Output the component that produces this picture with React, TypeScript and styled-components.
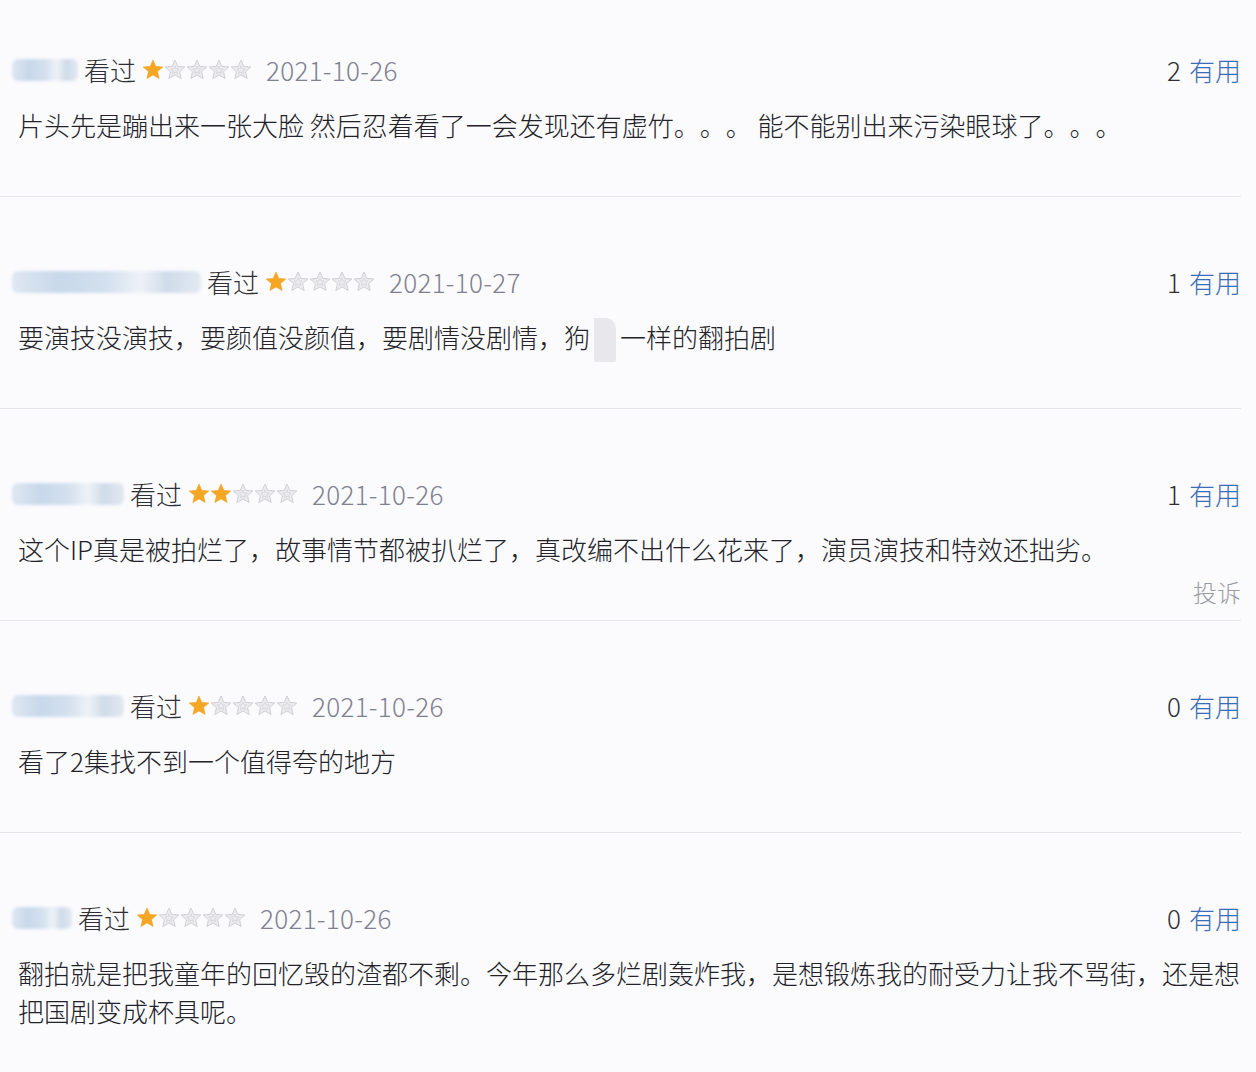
import React from "react";
import styled, { createGlobalStyle } from "styled-components";

const Global = createGlobalStyle`
  html, body { margin: 0; padding: 0; background: #fbfbfd; }
  body {
    font-family: "Noto Sans CJK SC", "Noto Sans", sans-serif;
    font-weight: 300;
    text-spacing-trim: space-all;
  }
`;

const List = styled.div`
  width: 1241px;
  display: flex;
  flex-direction: column;
`;

const Item = styled.div<{ $first?: boolean }>`
  display: flex;
  flex-direction: column;
  padding: ${(p) => (p.$first ? "54px" : "69px")} 0 12px 18px;
  border-bottom: 1px solid #e6e6ea;
`;

const Header = styled.div`
  display: flex;
  align-items: center;
  justify-content: space-between;
  height: 32px;
`;

const Meta = styled.div`
  display: flex;
  align-items: center;
`;

const NameBlur = styled.div<{ $w: number }>`
  width: ${(p) => p.$w}px;
  height: 22px;
  margin-left: -6px;
  margin-right: 6px;
  border-radius: 6px;
  background: linear-gradient(
    90deg,
    #dfe7f1 0%,
    #c8d8ea 25%,
    #d3e0ee 50%,
    #eef2f7 68%,
    #cfdbe9 82%,
    #e3e9f1 100%
  );
  filter: blur(1.5px);
`;

const Watched = styled.span`
  font-size: 26px;
  line-height: 32px;
  color: #2e2e34;
`;

const Stars = styled.div`
  display: flex;
  align-items: center;
  margin-left: 6px;
`;

const DateText = styled.span`
  margin-left: 14px;
  font-size: 26px;
  line-height: 32px;
  color: #808090;
  letter-spacing: 0.3px;
`;

const Useful = styled.div`
  display: flex;
  align-items: center;
  gap: 8px;
  font-size: 26px;
  line-height: 32px;
`;

const Count = styled.span`
  color: #2e2e34;
`;

const UsefulLink = styled.span`
  color: #3a6db5;
`;

const Content = styled.p`
  margin: 20px 0 0 0;
  width: 1224px;
  font-size: 26px;
  line-height: 38px;
  color: #222228;
`;

const Mask = styled.span`
  display: inline-block;
  width: 22px;
  height: 44px;
  vertical-align: top;
  margin: 0 4px -6px 4px;
  background: #e8e8ec;
  border-radius: 0 10px 2px 2px;
`;

const Footer = styled.div`
  display: flex;
  justify-content: flex-end;
  height: 32px;
  margin-top: 8px;
`;

const Report = styled.span`
  font-size: 24px;
  line-height: 32px;
  color: #9a9aa2;
`;

const STAR_PATH =
  "M11 1 L13.8 7.4 L20.8 8 L15.5 12.6 L17.1 19.5 L11 15.9 L4.9 19.5 L6.5 12.6 L1.2 8 L8.2 7.4 Z";

function Star({ filled }: { filled: boolean }) {
  return (
    <svg width="22" height="22" viewBox="0 0 22 22">
      {filled ? (
        <path d={STAR_PATH} fill="#f5a623" stroke="#f0a020" strokeWidth="0.6" />
      ) : (
        <>
          <path d={STAR_PATH} fill="#ececef" stroke="#cfcfd4" strokeWidth="1" />
          <path
            d="M11 7 L12.2 9.8 L15 10 L12.9 11.9 L13.5 14.6 L11 13.1 L8.5 14.6 L9.1 11.9 L7 10 L9.8 9.8 Z"
            fill="none"
            stroke="#d4d4d9"
            strokeWidth="0.8"
          />
        </>
      )}
    </svg>
  );
}

type Review = {
  nameW: number;
  rating: number;
  date: string;
  useful: number;
  text: React.ReactNode;
  report?: boolean;
};

const reviews: Review[] = [
  {
    nameW: 66,
    rating: 1,
    date: "2021-10-26",
    useful: 2,
    text: "片头先是蹦出来一张大脸 然后忍着看了一会发现还有虚竹。。。 能不能别出来污染眼球了。。。",
  },
  {
    nameW: 189,
    rating: 1,
    date: "2021-10-27",
    useful: 1,
    text: (
      <>
        要演技没演技，要颜值没颜值，要剧情没剧情，狗
        <Mask />
        一样的翻拍剧
      </>
    ),
  },
  {
    nameW: 112,
    rating: 2,
    date: "2021-10-26",
    useful: 1,
    text: "这个IP真是被拍烂了，故事情节都被扒烂了，真改编不出什么花来了，演员演技和特效还拙劣。",
    report: true,
  },
  {
    nameW: 112,
    rating: 1,
    date: "2021-10-26",
    useful: 0,
    text: "看了2集找不到一个值得夸的地方",
  },
  {
    nameW: 60,
    rating: 1,
    date: "2021-10-26",
    useful: 0,
    text: "翻拍就是把我童年的回忆毁的渣都不剩。今年那么多烂剧轰炸我，是想锻炼我的耐受力让我不骂街，还是想把国剧变成杯具呢。",
  },
];

export default function App() {
  return (
    <>
      <Global />
      <List>
        {reviews.map((r, i) => (
          <Item key={i} $first={i === 0}>
            <Header>
              <Meta>
                <NameBlur $w={r.nameW} />
                <Watched>看过</Watched>
                <Stars>
                  {[0, 1, 2, 3, 4].map((s) => (
                    <Star key={s} filled={s < r.rating} />
                  ))}
                </Stars>
                <DateText>{r.date}</DateText>
              </Meta>
              <Useful>
                <Count>{r.useful}</Count>
                <UsefulLink>有用</UsefulLink>
              </Useful>
            </Header>
            <Content>{r.text}</Content>
            <Footer>{r.report && <Report>投诉</Report>}</Footer>
          </Item>
        ))}
      </List>
    </>
  );
}
